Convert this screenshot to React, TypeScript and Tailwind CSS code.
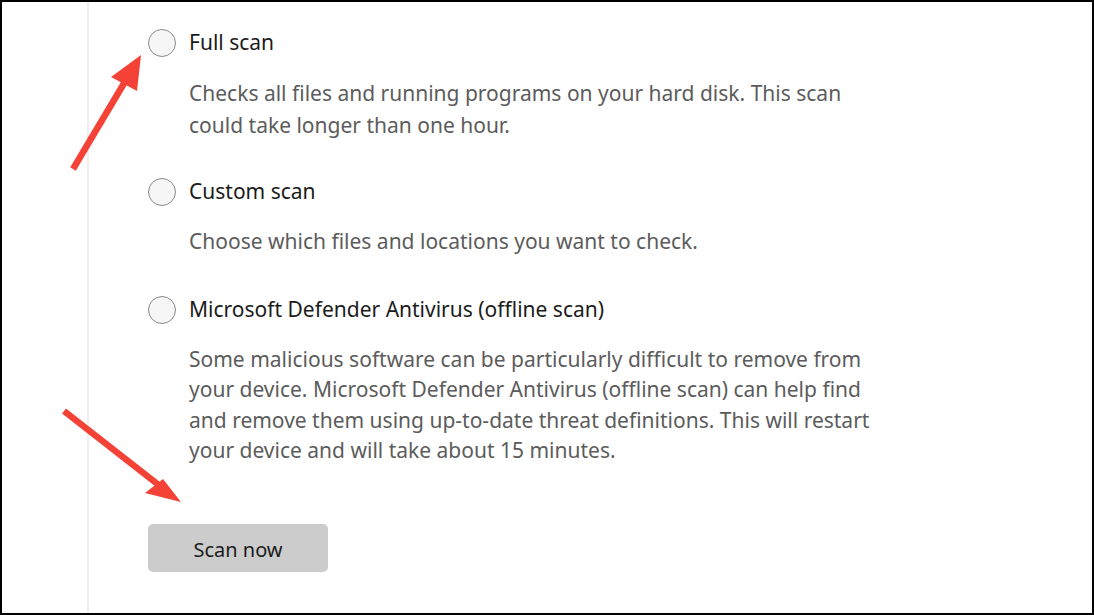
import React from 'react';

const font = { fontFamily: '"Segoe UI", "Noto Sans", "Open Sans", sans-serif' };

function Radio() {
  return <span className="block h-[28px] w-[28px] shrink-0 rounded-full border-[1.5px] border-[#8a8a8a] bg-[#f6f6f6]" />;
}

function Option({ title, lines, leading }: { title: string; lines: string[]; leading: string }) {
  return (
    <div>
      <div className="flex h-[28px] items-center gap-[13px]">
        <Radio />
        <span className="text-[21px] text-[#1b1b1b]">{title}</span>
      </div>
      <p className={`mt-[20px] pl-[41px] text-[21px] text-[#5c5c5c] ${leading}`}>
        {lines.map((l, i) => (
          <React.Fragment key={i}>
            {l}
            {i < lines.length - 1 && <br />}
          </React.Fragment>
        ))}
      </p>
    </div>
  );
}

export default function App() {
  return (
    <div className="relative h-[615px] w-[1094px] overflow-hidden border-2 border-black bg-white" style={font}>
      <div className="flex h-full">
        <div className="w-[85px] shrink-0" />
        <div className="w-[2px] shrink-0 bg-[#eeeeee]" />
        <div className="flex flex-col pl-[59px] pt-[27px]">
          <Option
            title="Full scan"
            leading="leading-[32px]"
            lines={['Checks all files and running programs on your hard disk. This scan', 'could take longer than one hour.']}
          />
          <div className="h-[37px]" />
          <Option
            title="Custom scan"
            leading="leading-[30px]"
            lines={['Choose which files and locations you want to check.']}
          />
          <div className="h-[40px]" />
          <Option
            title="Microsoft Defender Antivirus (offline scan)"
            leading="leading-[30.3px]"
            lines={[
              'Some malicious software can be particularly difficult to remove from',
              'your device. Microsoft Defender Antivirus (offline scan) can help find',
              'and remove them using up-to-date threat definitions. This will restart',
              'your device and will take about 15 minutes.',
            ]}
          />
          <button className="mt-[59px] h-[48px] w-[180px] rounded-[5px] bg-[#cccccc] pt-[3px] text-[20px] text-[#1b1b1b]">
            Scan now
          </button>
        </div>
      </div>
      <svg className="pointer-events-none absolute left-[-2px] top-[-2px]" width="1094" height="615">
        <line x1="73" y1="169" x2="126" y2="80" stroke="#f44336" strokeWidth="6.5" />
        <polygon points="141,55 111,77 137,91" fill="#f44336" />
        <line x1="64" y1="411" x2="160" y2="486" stroke="#f44336" strokeWidth="6.5" />
        <polygon points="181,502 145,493 163,479" fill="#f44336" />
      </svg>
    </div>
  );
}
